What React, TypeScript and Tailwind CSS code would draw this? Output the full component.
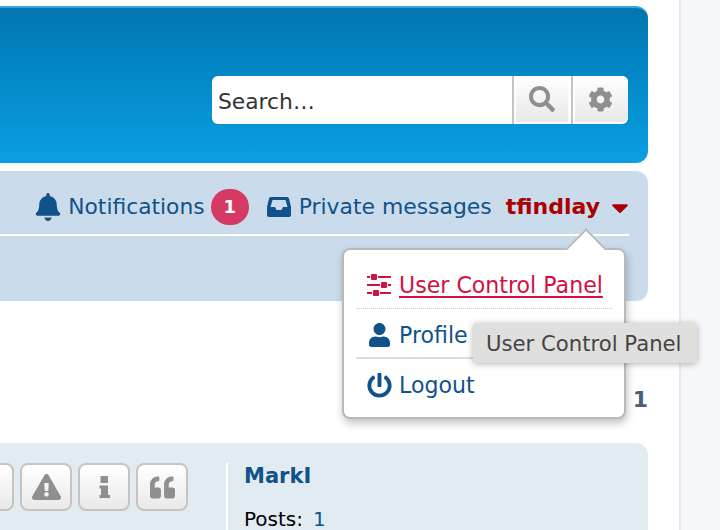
import React from 'react';
import {
  FaBell,
  FaCaretDown,
  FaCog,
  FaExclamationTriangle,
  FaPowerOff,
  FaQuoteLeft,
  FaSearch,
  FaUser,
} from 'react-icons/fa';

function SlidersIcon() {
  return (
    <svg viewBox="0 0 24 22" className="h-[22px] w-6 fill-current">
      <rect x="0" y="2" width="3" height="2" />
      <rect x="4" y="0" width="6" height="6" rx="1" />
      <rect x="11" y="2" width="13" height="2" />
      <rect x="0" y="10" width="13" height="2" />
      <rect x="14" y="8" width="6" height="6" rx="1" />
      <rect x="21" y="10" width="3" height="2" />
      <rect x="0" y="18" width="5" height="2" />
      <rect x="6" y="16" width="6" height="6" rx="1" />
      <rect x="13" y="18" width="11" height="2" />
    </svg>
  );
}

function InboxIcon() {
  return (
    <svg viewBox="0 0 24 20" className="ml-[18px] mr-2 h-5 w-6 fill-current">
      <path
        fillRule="evenodd"
        d="M4 0H20Q21.5 0 22 1.5L24 10V18Q24 20 22 20H2Q0 20 0 18V10L2 1.5Q2.5 0 4 0ZM5.5 3L3.5 10H8L9.5 13H14.5L16 10H20.5L18.5 3Z"
      />
    </svg>
  );
}

function InfoIcon() {
  return (
    <svg viewBox="0 0 11 22" className="h-[22px] w-[11px] fill-current">
      <rect x="1.5" y="0" width="7.5" height="7" rx="0.8" />
      <path d="M0.5 9.5H9V19H11V22H0.5V19H2V12.5H0.5Z" />
    </svg>
  );
}

function PostButton({ children }: { children?: React.ReactNode }) {
  return (
    <div className="flex h-12 w-[52px] shrink-0 items-center justify-center rounded-lg border-2 border-[#c7c3bf] bg-gradient-to-b from-white to-[#e9e9e9] text-[#8f8f8f]">
      {children}
    </div>
  );
}

function UserMenu() {
  return (
    <div className="absolute left-[342px] top-[248px] w-[284px] rounded-lg border-2 border-[#b9b9b9] bg-white px-3 pb-[8px] pt-[15px] text-[22.1px] shadow-[1px_4px_8px_rgba(0,0,0,0.25)]">
      {/* arrow on top of the menu */}
      <div className="absolute left-[228px] top-[-16px] h-7 w-7 rotate-45 border-l-2 border-t-2 border-[#b9b9b9] bg-white" />
      <div className="relative flex h-[44px] items-center gap-2 border-b border-dotted border-[#c8c8c8] pb-[3px] pl-[11px] text-[#d31141]">
        <SlidersIcon />
        <span className="underline underline-offset-[3px]">User Control Panel</span>
      </div>
      <div className="flex h-[50px] items-center gap-[9px] border-b-2 border-[#dddddd] pl-[13px] pt-1 text-[#105289]">
        <FaUser className="h-[24px] w-[21px]" />
        <span>Profile</span>
      </div>
      <div className="flex h-[50px] items-center gap-[7px] pl-[11px] pt-[2px] text-[#105289]">
        <FaPowerOff className="h-[25px] w-[25px]" />
        <span>Logout</span>
      </div>
    </div>
  );
}

export default function App() {
  return (
    <div className="relative flex h-[530px] w-[720px] overflow-hidden bg-white font-['DejaVu_Sans',Verdana,sans-serif] text-[21.8px] leading-none">
      <div className="flex w-[679px] flex-col pr-[31px] pt-[6px]">
        {/* header */}
        <div className="flex h-[157px] shrink-0 items-end justify-end rounded-r-xl border-t-2 border-[#3ba6dc] bg-gradient-to-b from-[#0076b1] to-[#0a9fe3] pb-[39px] pr-[20px]">
          <div className="flex h-12 w-[416px] overflow-hidden rounded-md bg-white">
            <div className="flex flex-1 items-center pl-[6px] pt-1 text-[#333333]">Search…</div>
            <div className="flex h-12 w-[59px] items-center justify-start border-l-2 border-[#c7c3bf] pb-[2px] pl-[2px]">
              <div className="flex h-[46px] w-[52px] items-center justify-center bg-gradient-to-b from-white to-[#e8e8e8] text-[#8f8f8f]">
                <FaSearch className="h-[26px] w-[26px]" />
              </div>
            </div>
            <div className="flex h-12 w-[57px] items-center justify-center border-l-2 border-[#c7c3bf] pb-[2px] pl-[2px]">
              <div className="flex h-[46px] w-[55px] items-center justify-center rounded-br-md bg-gradient-to-b from-white to-[#e8e8e8] pr-[3px] text-[#8f8f8f]">
                <FaCog className="h-[25px] w-[25px]" />
              </div>
            </div>
          </div>
        </div>

        {/* nav bar */}
        <div className="mt-2 h-[130px] shrink-0 rounded-r-xl bg-[#cadceb] pr-[19px]">
          <div className="flex h-[65px] items-center justify-end border-b-2 border-white pt-[9px] text-[#105289]">
            <FaBell className="mr-[7px] h-[28px] w-[26px]" />
            <span>Notifications</span>
            <span className="ml-[6px] flex h-9 w-[38px] items-center justify-center rounded-full bg-[#d43a63] pb-[1px] text-[18px] font-bold text-white">
              1
            </span>
            <InboxIcon />
            <span className="text-[21.9px]">Private messages</span>
            <span className="ml-[14px] text-[22px] font-bold text-[#aa0000]">tfindlay</span>
            <FaCaretDown className="ml-[11px] h-[27px] w-[18px] text-[#aa0000]" />
          </div>
        </div>

        {/* pagination under the bar */}
        <div className="flex h-[142px] shrink-0 items-end justify-end pb-[32px]">
          <span className="text-[22px] font-bold text-[#4c5d77]">1</span>
        </div>

        {/* post */}
        <div className="flex h-[200px] shrink-0 rounded-r-xl bg-[#e1ebf2] pt-5">
          <div className="flex h-[200px] w-[228px] shrink-0 justify-end gap-[6px] border-r-2 border-white pr-[38px]">
            <PostButton />
            <PostButton>
              <FaExclamationTriangle className="h-[26px] w-[29px]" />
            </PostButton>
            <PostButton>
              <InfoIcon />
            </PostButton>
            <PostButton>
              <FaQuoteLeft className="h-[25px] w-[27px]" />
            </PostButton>
          </div>
          <div className="pl-4">
            <div className="pt-[3px] text-[21px] font-bold text-[#105289]">MarkI</div>
            <div className="mt-[23px] flex text-[20px] leading-[18px] text-black">
              <span>Posts:</span>
              <span className="ml-[10px] text-[#105289]">1</span>
            </div>
          </div>
        </div>
      </div>

      {/* sidebar strip */}
      <div className="h-full flex-1 border-l-2 border-[#e6e9ef] bg-[#f5f7fb]" />

      <UserMenu />

      {/* tooltip over the menu */}
      <div className="absolute left-[473px] top-[323px] flex h-[40px] w-[224px] items-center rounded-[3px] bg-[#e0dfdd] pl-[13px] pt-[2px] text-[21.2px] text-[#444444] shadow-[0_1px_6px_rgba(0,0,0,0.3)]">
        User Control Panel
      </div>
    </div>
  );
}
